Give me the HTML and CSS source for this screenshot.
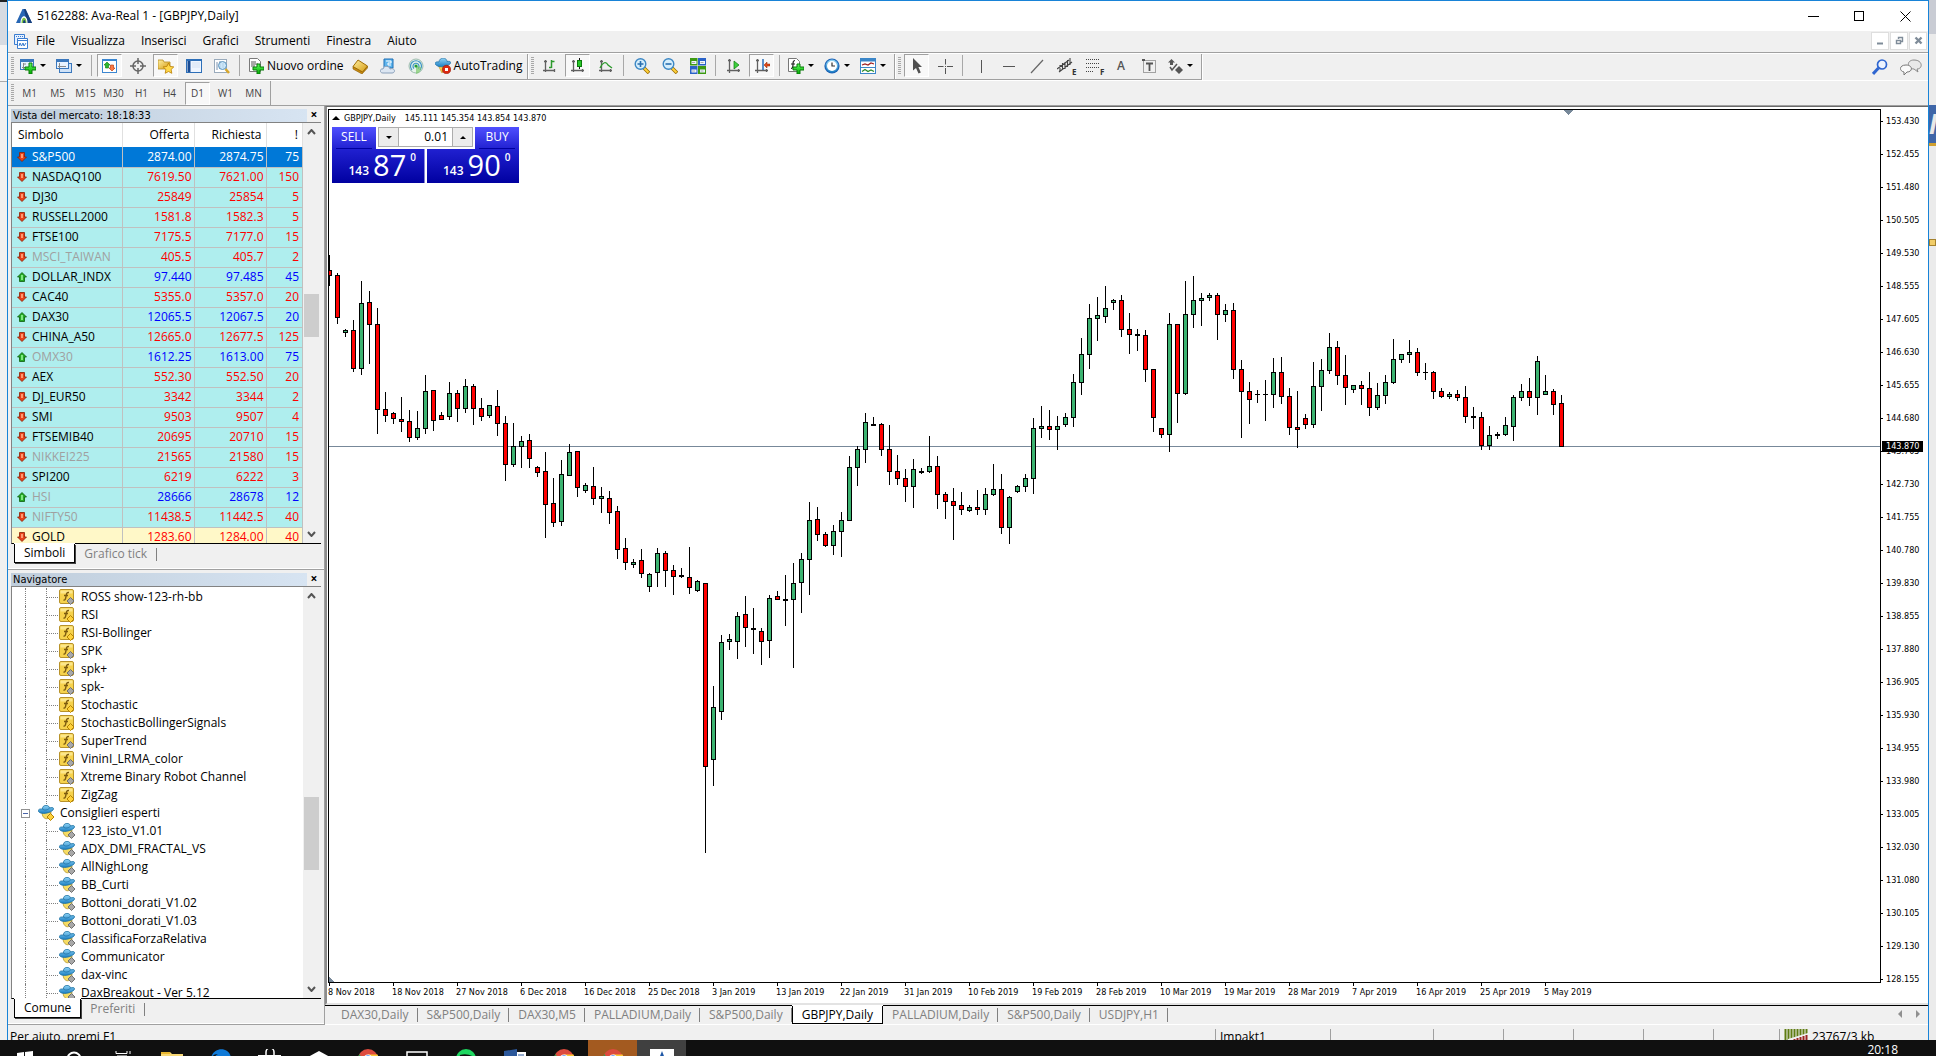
FILE: index.html
```html
<!DOCTYPE html>
<html lang="it">
<head>
  <meta charset="UTF-8">
  <title>5162288: Ava-Real 1 - [GBPJPY,Daily]</title>
  <link rel="stylesheet" href="styles.css">
</head>
<body>

<!-- Icon sprite -->
<svg class="sprite" aria-hidden="true">
  <defs>
    <linearGradient id="gBlue" x1="0" y1="0" x2="0" y2="1"><stop offset="0" stop-color="#8fd3f5"/><stop offset="1" stop-color="#1b7fc4"/></linearGradient>
    <linearGradient id="gGold" x1="0" y1="0" x2="1" y2="1"><stop offset="0" stop-color="#fff0a0"/><stop offset="1" stop-color="#d59a10"/></linearGradient>
    <linearGradient id="gGreen" x1="0" y1="0" x2="0" y2="1"><stop offset="0" stop-color="#5dff5d"/><stop offset="1" stop-color="#00a800"/></linearGradient>
  </defs>
  <symbol id="ava" viewBox="0 0 16 16"><path d="M6.500 1h3L16 15H0z" fill="#2766b4"/><path d="M8 1h1.500L16 15h-5z" fill="#173f7c"/><path d="M4.500 15c0-9 7-9 7 0z" fill="#fff"/><path d="M5.500 15c0-7 5-7 5 0z" fill="#7cc242"/><path d="M7 15c0-4 2.500-4 2.500 0z" fill="#173f7c"/></symbol>
  <symbol id="doc" viewBox="0 0 16 16"><path d="M2.500 1.500h10v10h-10z" fill="#e7f1ff" stroke="#3b7dd0"/><path d="M2 3.500h11" stroke="#3b7dd0" stroke-dasharray="1 1"/><path d="M5.500 5.500h10v10h-10z" fill="#fff" stroke="#3b7dd0"/><path d="M5.500 7.500h10" stroke="#3b7dd0"/><path d="M7 13l1-3 1.500 3 1.500-3 1 3 2-3" fill="none" stroke="#3b7dd0"/></symbol>
  <symbol id="newchart" viewBox="0 0 16 16"><rect x=".5" y="1.500" width="13" height="10" fill="#e8f3ff" stroke="#3b78bd"/><path d="M0 3h14" stroke="#3b78bd" stroke-width="2"/><path d="M3.500 5v6M2 9.500h8M3 6h3" stroke="#8a8a8a" fill="none"/><path d="M9 5h3v4h4v3h-4v4H9v-4H5V9h4z" fill="url(#gGreen)" stroke="#0a7a0a"/></symbol>
  <symbol id="profiles" viewBox="0 0 16 16"><rect x="3.500" y="5.500" width="12" height="9" fill="#cfe2f7" stroke="#3b78bd"/><rect x=".5" y="1.500" width="12" height="9" fill="#e8f3ff" stroke="#3b78bd"/><path d="M0 3h13" stroke="#3b78bd" stroke-width="2"/><path d="M3.500 5v5M2 8.500h8" stroke="#8a8a8a"/></symbol>
  <symbol id="market" viewBox="0 0 16 16"><rect x=".5" y="1.500" width="14" height="13" fill="#fff" stroke="#3b86d0"/><path d="M0 2h15" stroke="#3b86d0" stroke-width="2"/><path d="M5 4l3 3H6.500v3h-3V7H2z" fill="#2eb82e" stroke="#0a7a0a" stroke-width=".6"/><path d="M10 13l3-3h-1.500V7h-3v3H7z" fill="#ff7a45" stroke="#b03000" stroke-width=".6"/></symbol>
  <symbol id="data" viewBox="0 0 16 16"><circle cx="8" cy="8" r="5" fill="none" stroke="#666" stroke-width="1.500"/><path d="M8 0v6M8 10v6M0 8h6M10 8h6" stroke="#666" stroke-width="1.500"/></symbol>
  <symbol id="folder" viewBox="0 0 16 16"><path d="M0 2h5l1 2h6v7H0z" fill="url(#gGold)" stroke="#b58a1d" stroke-width=".8"/><path d="M10.500 5l1.600 3.400 3.700.5-2.700 2.600.7 3.800-3.300-1.800-3.300 1.800.7-3.800L5.200 8.900l3.700-.5z" fill="#ffd84a" stroke="#b97d00" stroke-width=".8"/></symbol>
  <symbol id="terminal" viewBox="0 0 16 16"><rect x=".5" y="1.500" width="15" height="13" fill="#eef5ff" stroke="#2d6fb8"/><path d="M1 2.500h14" stroke="#2d6fb8"/><path d="M3 3v11" stroke="#1a4c94" stroke-width="3"/><path d="M6 5h8M6 7h8M6 9h8" stroke="#c5d5ea" stroke-width=".6"/></symbol>
  <symbol id="tester" viewBox="0 0 16 16"><rect x=".5" y="1.500" width="12" height="13" fill="#fff" stroke="#9ab"/><path d="M3 4v8M6 3v8M9 5v5" stroke="#7d93b0"/><circle cx="8.500" cy="7.500" r="4" fill="#bfe1f8" fill-opacity=".8" stroke="#5b93bd"/><path d="M11.500 11l3.500 4" stroke="#d7a62b" stroke-width="2.500"/></symbol>
  <symbol id="order" viewBox="0 0 16 16"><path d="M1.500.5h8l3 3v10h-11z" fill="#fff" stroke="#7a7a7a"/><path d="M3 4h5M3 6h7M3 8h4" stroke="#555"/><path d="M9 6h3v3h4v3h-4v4H9v-4H5V9h4z" fill="url(#gGreen)" stroke="#0a7a0a"/></symbol>
  <symbol id="gold" viewBox="0 0 16 16"><path d="M1 8.500V11l9 5 5.500-6V8l-5 6z" fill="#c98a10" stroke="#8a5c00" stroke-width=".6"/><path d="M6 2l9.500 6-5 6L1 8.500z" fill="url(#gGold)" stroke="#a06d05"/></symbol>
  <symbol id="cloud" viewBox="0 0 16 16"><path d="M4 1h9v9H4z" fill="#5fb4ec" stroke="#1c6fb5"/><path d="M6 3h5v2H8v2h3" stroke="#fff" fill="none"/><path d="M3 15c-4 0-3-5 0-4 1-4 7-3 7 0 5-2 6 4 2 4z" fill="#dce6f2" stroke="#8aa0ba"/></symbol>
  <symbol id="signal" viewBox="0 0 16 16"><circle cx="8" cy="8" r="7" fill="#e6f2ea" stroke="#9dbcae"/><path d="M4 12a5.500 5.500 0 1 1 8 0M6 10.500a3 3 0 1 1 4 0" fill="none" stroke="#3d94c6" stroke-width="1.200"/><path d="M8 8v8c4-1 5-4 5-7" fill="#7cc96a" fill-opacity=".7"/><circle cx="8" cy="8" r="1.600" fill="#1f9a3a"/></symbol>
  <symbol id="auto" viewBox="0 0 16 16"><path d="M3 7l4 8 6-8z" fill="#ffd84a" stroke="#b58a1d" stroke-width=".6"/><path d="M4 4c0-5 8-5 8-.5 5-1 5 2.500-.5 4.500-4 1.500-9 1-11-1.500C-.5 4.500 1 3.500 4 4z" fill="url(#gBlue)" stroke="#1a6da3" stroke-width=".7"/><circle cx="11.500" cy="11.500" r="4.300" fill="#d92a12" stroke="#8e1200" stroke-width=".5"/><rect x="10" y="10" width="3" height="3" fill="#fff"/></symbol>
  <symbol id="bars" viewBox="0 0 16 16"><path d="M3.500 2v12M1 12.500h12M2 3.500h3M12.500 11v3" fill="none" stroke="#606060" stroke-width="1.300"/><path d="M9.500 2v8M9.500 3.500h3M7 9.500h2.500" fill="none" stroke="#2c9a2c" stroke-width="1.500"/></symbol>
  <symbol id="candle" viewBox="0 0 16 16"><path d="M3.500 2v12M1 12.500h13M2 3.500h3M12.500 11v3" fill="none" stroke="#606060" stroke-width="1.300"/><path d="M9.500 0v11" stroke="#111"/><rect x="7.500" y="2.500" width="4" height="6" fill="#28c828" stroke="#0a7a0a"/></symbol>
  <symbol id="line" viewBox="0 0 16 16"><path d="M3.500 2v12M1 12.500h13M2 3.500h3M12.500 11v3" fill="none" stroke="#606060" stroke-width="1.300"/><path d="M2 10c3-6 6-7 8-3l4 3" fill="none" stroke="#2c9a2c" stroke-width="1.300"/></symbol>
  <symbol id="zoomin" viewBox="0 0 16 16"><path d="M10 10l5 5" stroke="#9a6b00" stroke-width="3.500"/><path d="M10 10l4.500 4.500" stroke="#ffd23c" stroke-width="2"/><circle cx="6.500" cy="6" r="5.300" fill="#d5eefc" stroke="#3c87c4" stroke-width="1.400"/><path d="M3.500 6h6M6.500 3v6" stroke="#2a6faf" stroke-width="1.600"/></symbol>
  <symbol id="zoomout" viewBox="0 0 16 16"><path d="M10 10l5 5" stroke="#9a6b00" stroke-width="3.500"/><path d="M10 10l4.500 4.500" stroke="#ffd23c" stroke-width="2"/><circle cx="6.500" cy="6" r="5.300" fill="#d5eefc" stroke="#3c87c4" stroke-width="1.400"/><path d="M3.500 6h6" stroke="#2a6faf" stroke-width="1.600"/></symbol>
  <symbol id="tile" viewBox="0 0 16 16"><path d="M0 0h7.500v7.500H0zM8 8h8v8H8z" fill="#3d9a12"/><path d="M8 0h8v7.500H8zM0 8h7.500v8H0z" fill="#2a62c8"/><path d="M1.500 3h5v3h-5zM10 3h5v3h-5zM1.500 11.500h5v3h-5zM10 11.500h5v3h-5z" fill="#eef6ff"/><path d="M2 4.500h3M10.500 4.500h3M2 13h3M10.500 13h3" stroke="#999" stroke-width=".8"/></symbol>
  <symbol id="scroll" viewBox="0 0 16 16"><path d="M3.500 1v14M1 12.500h13M2 2.500h3M12.500 11v3" fill="none" stroke="#606060" stroke-width="1.300"/><path d="M8 3l5 4-5 4z" fill="#3ccf3c" stroke="#0a7a0a" stroke-width=".7"/></symbol>
  <symbol id="shift" viewBox="0 0 16 16"><path d="M3.500 1v14M1 12.500h13M2 2.500h3M12.500 11v3" fill="none" stroke="#606060" stroke-width="1.300"/><path d="M9 1v11" stroke="#1b66b8" stroke-width="1.400"/><path d="M10 7l3-3v2h3v2h-3v2z" fill="#e04a1a" stroke="#8e2500" stroke-width=".5"/></symbol>
  <symbol id="indic" viewBox="0 0 16 16"><path d="M.5.5h8l3 3v10H.500z" fill="#fff" stroke="#777"/><path d="M7 2.500c-2 0-2 2-2 4s0 4-2 4M3 6h4" fill="none" stroke="#222" stroke-width="1.200"/><path d="M9 6h3v3h4v3h-4v4H9v-4H5V9h4z" fill="url(#gGreen)" stroke="#0a7a0a"/></symbol>
  <symbol id="clock" viewBox="0 0 16 16"><circle cx="8" cy="8" r="7.600" fill="#1c63b6"/><circle cx="8" cy="8" r="6.400" fill="url(#gBlue)"/><circle cx="8" cy="8" r="5" fill="#fff"/><path d="M8 4.500V8h3" fill="none" stroke="#333" stroke-width="1.200"/></symbol>
  <symbol id="templ" viewBox="0 0 16 16"><rect x=".5" y=".5" width="15" height="15" fill="#fff" stroke="#3b86c8"/><path d="M1 2h14" stroke="#3b86c8" stroke-width="3"/><path d="M0 9.500h16" stroke="#3b86c8"/><path d="M2 7l3-1 3 1 3-2 3 1" fill="none" stroke="#a02020" stroke-width="1.300"/><path d="M2 13.500l3-2 3 2 3-1.500 3 1.500" fill="none" stroke="#2a8a2a" stroke-width="1.300"/></symbol>
  <symbol id="cursor" viewBox="0 0 16 16"><path d="M4 0v12.500l3-2.500 2.500 5.500 2.300-1L9.400 9H13z" fill="#505050"/></symbol>
  <symbol id="cross" viewBox="0 0 16 16"><path d="M8.500 1v5.500M8.500 10v6M1 8.500h5.500M10 8.500h6" stroke="#555"/><path d="M8 8h1v1H8z" fill="#555"/></symbol>
  <symbol id="vline" viewBox="0 0 16 16"><path d="M8.500 2v13" stroke="#555"/></symbol>
  <symbol id="hline" viewBox="0 0 16 16"><path d="M2 8.500h12" stroke="#555"/></symbol>
  <symbol id="trend" viewBox="0 0 16 16"><path d="M2 15L14 2" stroke="#666" stroke-width="1.200"/></symbol>
  <symbol id="channel" viewBox="0 0 16 16"><path d="M0 11l12-9M2 14L15 4M3 7v6M5.500 5v7M8 4v7M10.500 2v7M13 0v7" stroke="#444" stroke-width="1.100"/></symbol>
  <symbol id="fib" viewBox="0 0 16 16"><path d="M1 1.500h14M1 5.500h14M1 9.500h14M1 13.500h8" stroke="#444" stroke-dasharray="1 1"/></symbol>
  <symbol id="tbox" viewBox="0 0 16 16"><rect x="2.500" y="2.500" width="12" height="12" fill="none" stroke="#555" stroke-dasharray="1 1"/><path d="M5 5.500h7M8.500 5v8" stroke="#555" stroke-width="1.800"/><path d="M1 1h3v2H1z" fill="#555"/></symbol>
  <symbol id="shapes" viewBox="0 0 16 16"><path d="M4.500 1L8 4.500H6V7H3V4.500H1zM12 8l4 4-4 4-4-4z" fill="#555"/><path d="M3 9l2 3 5-6" fill="none" stroke="#555" stroke-width="1.500"/></symbol>
  <symbol id="search" viewBox="0 0 16 16"><circle cx="10" cy="5.500" r="4.500" fill="#eef4ff" stroke="#2f66d0" stroke-width="1.700"/><path d="M6.500 9L1 15" stroke="#2f66d0" stroke-width="3"/></symbol>
  <symbol id="chat" viewBox="0 0 22 16"><path d="M14 1c9 0 9 9 3 9l1 3-4-3C7 10 6 1 14 1z" fill="#e9e9e9" stroke="#8a8a8a"/><path d="M6 6c7 0 7 7 1 7l-3 3v-3C-1 12-1 6 6 6z" fill="#fafafa" stroke="#777"/></symbol>
  <symbol id="up" viewBox="0 0 10 10"><path d="M5 .5l4.500 4.500H7.500v4.500h-5V5H.5z" fill="#25a825" stroke="#0b5e0b" stroke-width=".8"/><path d="M4 3h2v5H4z" fill="#7ee87e"/></symbol>
  <symbol id="down" viewBox="0 0 10 10"><path d="M5 9.500L.5 5h2V.5h5V5h2z" fill="#e8421c" stroke="#8a1f00" stroke-width=".8"/><path d="M4 2h2v4H4z" fill="#ff9a70"/></symbol>
  <symbol id="fx" viewBox="0 0 16 16"><rect x=".5" y=".5" width="14" height="14" rx="1.500" fill="#f6d24c" stroke="#b8922a"/><path d="M1.500 1.500h12v3h-12z" fill="#fff0a8" stroke="none" opacity=".7"/><path d="M10 3.500c-2.500-.5-2.500 1.500-3 4s-.7 4-2.500 3.500M5 6.500h4" fill="none" stroke="#7d5c10" stroke-width="1.400"/><path d="M11.500 8.500l3.500 3.500-3.500 3.500L8 12z"/></symbol>
  <symbol id="hat" viewBox="0 0 16 16"><path d="M4 7c0 9 9 9 9 0z" fill="#f7dc62" stroke="#a88a22" stroke-width=".7"/><path d="M4.500 4C4-.5 11-.8 11.500 3c5-1.500 5.500 1.500 1 3.800C8 9 2 9 .5 6.500-.3 4.500 1.500 3.700 4.500 4z" fill="url(#gBlue)" stroke="#1b6f9f" stroke-width=".8"/><path d="M4.500 4.200c2 1.500 5 1 7-1" fill="none" stroke="#1b6f9f" stroke-width=".7"/><path d="M12.500 8.500L16 12l-3.500 3.500L9 12z"/></symbol>
  <symbol id="chrome" viewBox="0 0 22 22"><circle cx="11" cy="11" r="11" fill="#dd4b3e"/><path d="M11 6h10.500A11 11 0 0 1 11 22z" fill="#fdc734"/><path d="M1.500 5.500L7 14l4 8A11 11 0 0 1 1.500 5.500z" fill="#2ba24c"/><circle cx="11" cy="11" r="5" fill="#fff"/><circle cx="11" cy="11" r="4" fill="#4286f5"/></symbol>
</svg>

<div class="desktop">
  <div class="behind behind-left"></div>

  <main class="window">
    <!-- Title bar -->
    <header class="titlebar">
      <svg class="icon"><use href="#ava"/></svg>
      <h1>5162288: Ava-Real 1 - [GBPJPY,Daily]</h1>
      <div class="window-buttons">
        <button aria-label="Riduci"><svg width="11" height="11"><path d="M0 5.500h11" stroke="#000"/></svg></button>
        <button aria-label="Ingrandisci"><svg width="11" height="11"><rect x=".5" y=".5" width="9" height="9" fill="none" stroke="#000"/></svg></button>
        <button aria-label="Chiudi"><svg width="11" height="11"><path d="M.5.5l10 10M10.500.5l-10 10" stroke="#000"/></svg></button>
      </div>
    </header>

    <!-- Menu bar -->
    <nav class="menubar">
      <svg class="icon"><use href="#doc"/></svg>
      <button>File</button>
      <button>Visualizza</button>
      <button>Inserisci</button>
      <button>Grafici</button>
      <button>Strumenti</button>
      <button>Finestra</button>
      <button>Aiuto</button>
      <div class="mdi-buttons">
        <button aria-label="Riduci grafico"><svg width="9" height="9"><path d="M1 7.500h6" stroke="#7f8c99" stroke-width="2"/></svg></button>
        <button aria-label="Ripristina grafico"><svg width="9" height="9"><path d="M3.500 3V1.500h4v4H6M3 1.500h5M1.500 4.500h4v3h-4z" fill="none" stroke="#7f8c99" stroke-width="1.400"/></svg></button>
        <button aria-label="Chiudi grafico"><svg width="9" height="9"><path d="M1.500 1.500l6 6M7.500 1.500l-6 6" stroke="#7f8c99" stroke-width="2.400"/></svg></button>
      </div>
    </nav>

    <!-- Main toolbar -->
    <div class="toolbar">
      <div class="group">
        <i class="grip"></i>
        <button class="drop" aria-label="Nuovo grafico"><svg class="icon"><use href="#newchart"/></svg></button>
        <button class="drop" aria-label="Profili"><svg class="icon"><use href="#profiles"/></svg></button>
        <i class="sep"></i>
        <button class="tool pressed" aria-label="Vista del mercato"><svg class="icon"><use href="#market"/></svg></button>
        <button class="tool" aria-label="Finestra dati"><svg class="icon"><use href="#data"/></svg></button>
        <button class="tool pressed" aria-label="Navigatore"><svg class="icon"><use href="#folder"/></svg></button>
        <button class="tool" aria-label="Terminale"><svg class="icon"><use href="#terminal"/></svg></button>
        <button class="tool" aria-label="Strategy Tester"><svg class="icon"><use href="#tester"/></svg></button>
        <i class="sep"></i>
        <button class="wide"><svg class="icon"><use href="#order"/></svg>Nuovo ordine</button>
        <button class="tool" aria-label="MetaEditor"><svg class="icon"><use href="#gold"/></svg></button>
        <button class="tool" aria-label="Cloud"><svg class="icon"><use href="#cloud"/></svg></button>
        <button class="tool" aria-label="Segnali"><svg class="icon"><use href="#signal"/></svg></button>
        <button class="wide"><svg class="icon"><use href="#auto"/></svg>AutoTrading</button>
      </div>
      <div class="group">
        <i class="grip"></i>
        <button class="tool" aria-label="Barre"><svg class="icon"><use href="#bars"/></svg></button>
        <button class="tool pressed" aria-label="Candele"><svg class="icon"><use href="#candle"/></svg></button>
        <button class="tool" aria-label="Linea"><svg class="icon"><use href="#line"/></svg></button>
        <i class="sep"></i>
        <button class="tool" aria-label="Zoom avanti"><svg class="icon"><use href="#zoomin"/></svg></button>
        <button class="tool" aria-label="Zoom indietro"><svg class="icon"><use href="#zoomout"/></svg></button>
        <button class="tool" aria-label="Affianca"><svg class="icon"><use href="#tile"/></svg></button>
        <i class="sep"></i>
        <button class="tool" aria-label="Scorrimento automatico"><svg class="icon"><use href="#scroll"/></svg></button>
        <button class="tool pressed" aria-label="Sposta grafico"><svg class="icon"><use href="#shift"/></svg></button>
        <i class="sep"></i>
        <button class="drop" aria-label="Indicatori"><svg class="icon"><use href="#indic"/></svg></button>
        <button class="drop" aria-label="Periodi"><svg class="icon"><use href="#clock"/></svg></button>
        <button class="drop" aria-label="Modelli"><svg class="icon"><use href="#templ"/></svg></button>
      </div>
      <div class="group">
        <i class="grip"></i>
        <button class="tool pressed" aria-label="Cursore"><svg class="icon"><use href="#cursor"/></svg></button>
        <button class="tool" aria-label="Mirino"><svg class="icon"><use href="#cross"/></svg></button>
        <i class="sep"></i>
        <button class="tool" aria-label="Linea verticale"><svg class="icon"><use href="#vline"/></svg></button>
        <button class="tool" aria-label="Linea orizzontale"><svg class="icon"><use href="#hline"/></svg></button>
        <button class="tool" aria-label="Trendline"><svg class="icon"><use href="#trend"/></svg></button>
        <button class="tool marked"><svg class="icon"><use href="#channel"/></svg><b>E</b></button>
        <button class="tool marked"><svg class="icon"><use href="#fib"/></svg><b>F</b></button>
        <button class="tool letter">A</button>
        <button class="tool" aria-label="Etichetta"><svg class="icon"><use href="#tbox"/></svg></button>
        <button class="drop" aria-label="Frecce"><svg class="icon"><use href="#shapes"/></svg></button>
      </div>
      <div class="toolbar-right">
        <button aria-label="Cerca"><svg class="icon"><use href="#search"/></svg></button>
        <button aria-label="Chat"><svg class="chat"><use href="#chat"/></svg></button>
      </div>
    </div>

    <!-- Timeframes -->
    <div class="toolbar periods">
      <div class="group">
        <i class="grip"></i>
        <button class="tool">M1</button>
        <button class="tool">M5</button>
        <button class="tool">M15</button>
        <button class="tool">M30</button>
        <button class="tool">H1</button>
        <button class="tool">H4</button>
        <button class="tool pressed">D1</button>
        <button class="tool">W1</button>
        <button class="tool">MN</button>
      </div>
    </div>

    <div class="workspace">
      <aside class="side">
        <!-- Market watch -->
        <section class="panel market">
          <div class="panel-title"><h2>Vista del mercato: 18:18:33</h2><button aria-label="Chiudi">×</button></div>
          <div class="box">
            <table class="quotes">
              <thead>
                <tr><th>Simbolo</th><th>Offerta</th><th>Richiesta</th><th>!</th></tr>
              </thead>
              <tbody id="quotes"></tbody>
            </table>
            <div class="scrollbar">
              <svg width="9" height="6"><path d="M1 5l3.500-4L8 5" fill="none" stroke="#555" stroke-width="2"/></svg>
              <i class="thumb"></i>
              <svg width="9" height="6"><path d="M1 1l3.500 4L8 1" fill="none" stroke="#555" stroke-width="2"/></svg>
            </div>
          </div>
          <div class="panel-tabs"><button class="active">Simboli</button><button>Grafico tick</button></div>
        </section>

        <!-- Navigator -->
        <section class="panel navigator">
          <div class="panel-title"><h2>Navigatore</h2><button aria-label="Chiudi">×</button></div>
          <div class="box">
            <ul class="tree" id="tree"></ul>
            <div class="scrollbar">
              <svg width="9" height="6"><path d="M1 5l3.500-4L8 5" fill="none" stroke="#555" stroke-width="2"/></svg>
              <i class="thumb"></i>
              <svg width="9" height="6"><path d="M1 1l3.500 4L8 1" fill="none" stroke="#555" stroke-width="2"/></svg>
            </div>
          </div>
          <div class="panel-tabs"><button class="active">Comune</button><button>Preferiti</button></div>
        </section>
      </aside>

      <!-- Chart -->
      <section class="chart-area">
        <div class="chart">
          <div class="plot">
            <svg class="candles" id="candles"></svg>
            <div class="chart-head"><i></i><span>GBPJPY,Daily</span><span class="ohlc">145.111 145.354 143.854 143.870</span></div>
            <div class="trade">
              <button class="deal sell"><span class="side-name">SELL</span><span class="price"><b>143</b><big>87</big><sup>0</sup></span></button>
              <button class="deal buy"><span class="side-name">BUY</span><span class="price"><b>143</b><big>90</big><sup>0</sup></span></button>
              <div class="volume">
                <button aria-label="Diminuisci" class="less"></button>
                <input type="text" value="0.01" aria-label="Volume">
                <button aria-label="Aumenta" class="more"></button>
              </div>
            </div>
          </div>
          <div class="price-axis"><ol id="prices"></ol><span class="current">143.870</span></div>
          <ol class="time-axis" id="dates"></ol>
        </div>
        <div class="chart-tabs">
          <button>DAX30,Daily</button>
          <button>S&amp;P500,Daily</button>
          <button>DAX30,M5</button>
          <button>PALLADIUM,Daily</button>
          <button>S&amp;P500,Daily</button>
          <button class="active">GBPJPY,Daily</button>
          <button>PALLADIUM,Daily</button>
          <button>S&amp;P500,Daily</button>
          <button>USDJPY,H1</button>
          <span class="tab-scroll"><i class="left"></i><i class="right"></i></span>
        </div>
      </section>
    </div>

    <!-- Status bar -->
    <footer class="status">
      <span class="help">Per aiuto, premi F1</span>
      <span class="cell profile">Impakt1</span>
      <span class="cell date"></span>
      <span class="cell value"></span>
      <span class="cell value"></span>
      <span class="cell value"></span>
      <span class="cell value"></span>
      <span class="cell volume-cell"></span>
      <span class="cell traffic">
        <svg width="24" height="16"><path d="M1.500 0v16M4.500 0v16M7.500 0v16M10.500 0v16M13.500 0v16M16.500 0v16M19.500 0v16M22.500 0v16" stroke="#5f7d12" stroke-width="2"/><path d="M4 16V10L24 4v12z" fill="#f0f0f0"/><path d="M4.500 12v4M7.500 11v5M10.500 10v6M13.500 9v7M16.500 8v8M19.500 7v9M22.500 6v10" stroke="#9c2222" stroke-width="2"/></svg>
        23767/3 kb
      </span>
    </footer>
  </main>

  <div class="behind behind-right"><i class="tab"></i><i class="tile">M</i><i class="note"></i></div>
</div>

<!-- Windows taskbar -->
<div class="taskbar">
  <button aria-label="Start"><svg width="16" height="16"><path d="M0 2l7-1v6H0zM8 1l8-1v7H8zM0 8h7v6l-7-1zM8 8h8v8l-8-1z" fill="#fff"/></svg></button>
  <button aria-label="Cortana"><svg width="16" height="16"><circle cx="8" cy="8" r="6.500" fill="none" stroke="#fff" stroke-width="2"/></svg></button>
  <button aria-label="Attività"><svg width="16" height="16"><path d="M1 0v2.500h11V0M15 0v3M15 5v8M2 5h10v8H2z" fill="none" stroke="#fff"/></svg></button>
  <button aria-label="Esplora file"><svg width="22" height="18"><path d="M0 1h9l2 2h11v15H0z" fill="#f7d774"/><path d="M0 1h9v2H0z" fill="#e8b630"/></svg></button>
  <button aria-label="Edge" class="tall"><svg width="20" height="20"><path d="M0 10C1-3 20-3 20 10v2H6c1 5 8 5 12 3v4C8 23 0 18 2 11c1-3 3-5 5-6-5 0-6 3-7 5z" fill="#0f7ad8"/></svg></button>
  <button aria-label="Store" class="tall"><svg width="24" height="20"><path d="M8 6V3a3.500 3.500 0 0 1 8 0v3" fill="none" stroke="#fff" stroke-width="1.500"/><path d="M0 6h23v14H0z" fill="#fff"/></svg></button>
  <button aria-label="App"><svg width="22" height="20"><path d="M11 0l11 6v14H0V6z" fill="#fff"/></svg></button>
  <button aria-label="Chrome" class="tall"><svg width="20" height="20"><use href="#chrome"/></svg></button>
  <button aria-label="Console"><svg width="22" height="18"><rect x="1" y="1" width="20" height="16" fill="#111" stroke="#fff" stroke-width="1.500"/></svg></button>
  <button aria-label="Spotify" class="tall"><svg width="20" height="20"><circle cx="10" cy="10" r="10" fill="#1ed760"/><path d="M4 7c4-1 8-1 12 1" fill="none" stroke="#111" stroke-width="2"/></svg></button>
  <button aria-label="Word" class="tall"><svg width="22" height="20"><path d="M11 3h11v17H11z" fill="#fff"/><path d="M0 2l13-2v20H0z" fill="#2b579a"/><path d="M14 6h6M14 9h6" stroke="#2b579a"/></svg></button>
  <button aria-label="Chrome" class="tall"><svg width="20" height="20"><use href="#chrome"/></svg></button>
  <button aria-label="Chrome" class="tall alert"><svg width="20" height="20"><use href="#chrome"/></svg></button>
  <button aria-label="Ava" class="tall on"><svg width="24" height="20"><path d="M0 0h24v20H0z" fill="#fff"/><path d="M12 2l7 18H5z" fill="#1d56a5"/></svg></button>
  <time>20:18</time>
</div>

<script src="script.js"></script>
</body>
</html>
```

FILE: styles.css
```css
/* Base */
* {
  box-sizing: border-box;
}

body {
  margin: 0;
  height: 100vh;
  display: flex;
  flex-direction: column;
  overflow: hidden;
  background: #f0f0f0;
  color: #000;
  font: 12px/16px "Open Sans", "Noto Sans", sans-serif;
}

h1, h2 {
  margin: 0;
  font-size: 12px;
  font-weight: normal;
}

button {
  margin: 0;
  padding: 0;
  border: 0;
  background: none;
  color: inherit;
  font: inherit;
  white-space: nowrap;
}

ul, ol {
  margin: 0;
  padding: 0;
  list-style: none;
}

.sprite {
  position: absolute;
  width: 0;
  height: 0;
}

.icon {
  width: 16px;
  height: 16px;
  flex: none;
}

/* Desktop and the windows that show at both sides */
.desktop {
  flex: 1;
  min-height: 0;
  display: flex;
  overflow: hidden;
}

.behind {
  width: 7px;
  flex: none;
  overflow: hidden;
}

.behind-left {
  background: linear-gradient(#222 2px, #d6dbe2 2px, #d6dbe2 45px, #f4f4f4 45px, #f4f4f4 81px, #aaa 81px, #aaa 82px, #f0f0f0 82px);
}

.behind-right {
  display: flex;
  flex-direction: column;
  background: #ebebeb;
}

.behind-right .tab {
  height: 34px;
  background: #c9ccd4;
  margin-bottom: 71px;
}

.behind-right .tile {
  height: 41px;
  background: #3f66a8;
  border-bottom: 3px solid #d0a030;
  color: #e8e8e8;
  font: italic bold 30px/38px "Liberation Sans", sans-serif;
  margin-bottom: 93px;
}

.behind-right .note {
  height: 7px;
  background: #f1cd69;
  border: 1px solid #a5822e;
}

/* The window runs on below the taskbar */
.window {
  flex: 1;
  min-width: 0;
  height: calc(100% + 8px);
  display: flex;
  flex-direction: column;
  border: 1px solid #1883d7;
  border-bottom: 0;
  background: #f0f0f0;
}

.titlebar {
  height: 30px;
  flex: none;
  display: flex;
  align-items: center;
  gap: 5px;
  padding-left: 8px;
  background: #fff;
}

.window-buttons {
  margin-left: auto;
  display: flex;
}

.window-buttons button {
  width: 46px;
  height: 29px;
  display: grid;
  place-items: center;
}

.menubar {
  height: 22px;
  flex: none;
  display: flex;
  align-items: center;
  gap: 16px;
  padding: 0 0 2px 4px;
  border-bottom: 1px solid #a0a0a0;
}

.menubar .icon {
  margin-right: -8px;
}

.mdi-buttons {
  margin-left: auto;
  display: flex;
  gap: 1px;
  padding-right: 1px;
}

.mdi-buttons button {
  width: 18px;
  height: 18px;
  display: grid;
  place-items: center;
  background: #fff;
  border: 1px solid #dedede;
}

/* Toolbars */
.toolbar {
  height: 27px;
  flex: none;
  display: flex;
  border-top: 1px solid #fff;
}

.group {
  display: flex;
  align-items: center;
  gap: 3px;
  padding: 0 4px 2px 3px;
  border-right: 1px solid #a0a0a0;
  border-bottom: 1px solid #a0a0a0;
  box-shadow: 1px 1px #fff;
}

.grip {
  width: 3px;
  height: 18px;
  background: repeating-linear-gradient(#a8a8a8 0 1px, #f0f0f0 1px 2px);
}

.sep {
  width: 1px;
  height: 21px;
  margin: 0 2px;
  background: #a8a8a8;
}

.tool {
  width: 25px;
  height: 23px;
  display: flex;
  align-items: center;
  justify-content: center;
}

.pressed {
  border: 1px solid #fff;
  border-top-color: #a0a0a0;
  border-left-color: #a0a0a0;
  background: #f8f8f8;
}

.drop {
  width: 33px;
  padding-left: 3px;
  display: flex;
  align-items: center;
  gap: 4px;
}

.drop::after {
  content: "";
  border: 3px solid transparent;
  border-top-color: #000;
  border-bottom: 0;
}

.wide {
  display: flex;
  align-items: center;
  gap: 3px;
  padding: 0 1px 0 3px;
}

.marked {
  position: relative;
}

.marked b {
  position: absolute;
  right: 1px;
  bottom: 1px;
  font-size: 8px;
  line-height: 8px;
  color: #333;
}

.letter {
  font-weight: 600;
  color: #555;
}

.toolbar-right {
  margin-left: auto;
  display: flex;
  align-items: center;
  gap: 12px;
  padding-right: 6px;
}

.toolbar-right button {
  display: flex;
}

.chat {
  width: 22px;
  height: 16px;
}

.periods {
  height: 26px;
  border-bottom: 1px solid #a0a0a0;
  color: #444;
  font-size: 10px;
}

.periods .group {
  padding-bottom: 0;
  border-bottom: 0;
  box-shadow: none;
}

/* Panels at the left */
.workspace {
  flex: 1;
  min-height: 0;
  display: flex;
}

.side {
  width: 317px;
  flex: none;
  display: flex;
  flex-direction: column;
  border-right: 1px solid #a0a0a0;
}

.panel {
  display: flex;
  flex-direction: column;
  min-height: 0;
  padding: 2px 3px 5px 3px;
  border-bottom: 1px solid #a0a0a0;
  box-shadow: inset 0 -1px #fff;
}

.market {
  flex: 0 0 464px;
}

.navigator {
  flex: 1;
}

.panel-title {
  height: 14px;
  flex: none;
  display: flex;
  align-items: center;
}

.panel-title h2 {
  flex: 1;
  padding-left: 2px;
  height: 13px;
  font: 11px/13px "DejaVu Sans Condensed", "DejaVu Sans", sans-serif;
  background: linear-gradient(90deg, #bfcddb, #d7e4f2);
}

.panel-title button {
  width: 14px;
  font-weight: bold;
  line-height: 12px;
}

.box {
  flex: 1;
  min-height: 0;
  display: flex;
  overflow: hidden;
  background: #fff;
  border-top: 1px solid #828282;
  border-left: 1px solid #828282;
  border-bottom: 1px solid #000;
}

.scrollbar {
  width: 18px;
  flex: none;
  display: flex;
  flex-direction: column;
  align-items: center;
  padding: 6px 2px 6px 0;
  background: #f0f0f0;
}

.thumb {
  width: 15px;
  height: 43px;
  margin: 159px 0 auto;
  background: #cdcdcd;
}

.navigator .thumb {
  height: 73px;
  margin-top: 198px;
}

.quotes {
  flex: 1;
  align-self: flex-start;
  table-layout: fixed;
  border-collapse: collapse;
}

.quotes th {
  height: 24px;
  padding: 0 4px 0 0;
  font-weight: normal;
  text-align: right;
  border-right: 1px solid #e0e0e0;
}

.quotes th:first-child {
  width: 110px;
  padding-left: 6px;
  text-align: left;
}

.quotes th:nth-child(2), .quotes th:nth-child(3) {
  width: 72px;
}

.quotes td {
  height: 20px;
  padding: 0 2px 0 0;
  text-align: right;
  background: #afeeee;
  color: #f00;
  border-right: 1px solid #c0c0c0;
  border-bottom: 1px solid #c0c0c0;
}

.quotes td:first-child {
  padding-left: 5px;
  text-align: left;
  color: #000;
}

.quotes td:last-child {
  padding-right: 3px;
}

.quotes td svg {
  width: 10px;
  height: 10px;
  margin-right: 5px;
  vertical-align: -1px;
}

.quotes .rise td {
  color: #00f;
}

.quotes .rise td:first-child {
  color: #000;
}

.quotes .closed td:first-child {
  color: #a0a0a0;
}

.quotes .selected td, .quotes .selected td:first-child {
  background: #0078d7;
  color: #fff;
}

.quotes .metal td {
  background: #fff8c8;
}

.panel-tabs {
  height: 20px;
  flex: none;
  display: flex;
  align-items: flex-start;
  padding-left: 3px;
  color: #808080;
}

.panel-tabs button {
  height: 19px;
  padding: 0 9px;
}

.panel-tabs button:not(.active)::after {
  content: "";
  display: inline-block;
  height: 13px;
  margin-left: 9px;
  border-left: 1px solid #808080;
  vertical-align: -3px;
}

.panel-tabs .active {
  background: #fff;
  color: #000;
  border: 1px solid #000;
  border-top: 0;
  box-shadow: 0 -1px #fff, 1px 1px #444;
}

/* Navigator tree */
.tree {
  flex: 1;
  min-width: 0;
  padding-top: 1px;
}

.tree li {
  height: 18px;
  display: flex;
  align-items: center;
  white-space: nowrap;
}

.tree .trunk {
  width: 21px;
  height: 18px;
  margin-left: 13px;
  border-left: 1px dotted #808080;
}

.tree .branch {
  width: 13px;
  height: 18px;
  background: linear-gradient(90deg, #808080 50%, transparent 50%) 0 9px / 2px 1px repeat-x;
  border-left: 1px dotted #808080;
}

.tree .icon {
  margin-right: 6px;
}

.tree .node {
  width: 9px;
  height: 9px;
  margin: 0 8px 0 9px;
  border: 1px solid #919191;
  background: linear-gradient(#4a64a8, #4a64a8) center / 5px 1px no-repeat, #fff;
}

.grey-badge {
  fill: #a8a8a8;
  stroke: #707070;
}

.gold-badge {
  fill: #ffd23c;
  stroke: #b58200;
}

/* Chart */
.chart-area {
  flex: 1;
  min-width: 0;
  display: flex;
  flex-direction: column;
}

.chart {
  flex: 1;
  min-height: 0;
  display: grid;
  grid-template-columns: minmax(0, 1fr) 47px;
  grid-template-rows: minmax(0, 1fr) 20px;
  padding: 2px 0 0 1px;
  background: #fff;
  border-top: 1px solid #696969;
  border-left: 2px solid #8c8c8c;
  border-bottom: 2px solid #e3e3e3;
  font: 9px/12px "DejaVu Sans Condensed", "DejaVu Sans", sans-serif;
}

.plot {
  position: relative;
  border: 1px solid #000;
}

.candles {
  display: block;
  width: 100%;
  height: 100%;
  shape-rendering: crispEdges;
}

.chart-head {
  position: absolute;
  top: 2px;
  left: 3px;
  display: flex;
  align-items: center;
  gap: 4px;
}

.chart-head i {
  border: 4px solid transparent;
  border-bottom-color: #000;
  border-top: 0;
}

.ohlc {
  margin-left: 5px;
}

/* One-click trading */
.trade {
  position: absolute;
  top: 17px;
  left: 3px;
  width: 187px;
  height: 56px;
  display: grid;
  grid-template-columns: 1fr 1fr;
  gap: 2px;
  font: 12px/16px "Open Sans", "Noto Sans", sans-serif;
  color: #fff;
}

.deal {
  display: flex;
  flex-direction: column;
  background: linear-gradient(#5050ff, #2020d0 40%, #0000a0);
}

.sell {
  clip-path: polygon(0 0, 44px 0, 44px 22px, 100% 22px, 100% 100%, 0 100%);
}

.buy {
  align-items: flex-end;
  clip-path: polygon(100% 0, calc(100% - 44px) 0, calc(100% - 44px) 22px, 0 22px, 0 100%, 100% 100%);
}

.side-name {
  width: 36px;
  height: 22px;
  margin: 0 4px;
  line-height: 20px;
  border-bottom: 1px solid #0000a0;
  text-align: center;
}

.price {
  width: 100%;
  height: 32px;
  padding-left: 8px;
  display: flex;
  justify-content: center;
  align-items: flex-end;
  gap: 4px;
}

.price b {
  font-weight: 600;
  line-height: 20px;
}

.price big {
  font-size: 29px;
  line-height: 32px;
}

.price sup {
  align-self: flex-start;
  font-weight: 600;
  line-height: 16px;
}

.volume {
  position: absolute;
  top: 0;
  left: 46px;
  width: 95px;
  height: 20px;
  display: flex;
  border: 1px solid #adadad;
}

.volume button {
  width: 19px;
  display: grid;
  place-items: center;
  background: #ececec;
}

.volume button::before {
  content: "";
  border: 3px solid transparent;
}

.volume .less::before {
  border-top-color: #000;
  border-bottom: 0;
}

.volume .more::before {
  border-bottom-color: #000;
  border-top: 0;
}

.volume input {
  flex: 1;
  min-width: 0;
  padding: 0 4px;
  border: solid #adadad;
  border-width: 0 1px;
  font: inherit;
  text-align: right;
}

/* Axes */
.price-axis {
  position: relative;
  padding-top: 6px;
}

.price-axis li {
  height: 33px;
  display: flex;
  align-items: flex-start;
  gap: 3px;
}

.price-axis li::before {
  content: "";
  width: 2px;
  height: 1px;
  margin-top: 6px;
  background: #000;
}

.current {
  position: absolute;
  top: 332px;
  left: 1px;
  width: 41px;
  padding-left: 4px;
  line-height: 11px;
  background: #000;
  color: #fff;
}

.time-axis {
  grid-column: 1 / 3;
  display: flex;
}

.time-axis li {
  width: 64px;
  flex: none;
  white-space: nowrap;
}

.time-axis li::before {
  content: "";
  display: block;
  width: 1px;
  height: 3px;
  margin-left: 1px;
  background: #000;
}

.chart-tabs {
  height: 20px;
  flex: none;
  display: flex;
  align-items: flex-start;
  padding-left: 7px;
  border-top: 1px solid #000;
  border-bottom: 1px solid #fff;
  color: #808080;
}

.chart-tabs button {
  height: 18px;
  padding: 0 9px;
  background: linear-gradient(#808080, #808080) right 2px / 1px 14px no-repeat;
}

.chart-tabs .active {
  background: #fff;
  color: #000;
  border: 1px solid #000;
  border-top: 0;
  box-shadow: 0 -1px #fff;
}

.tab-scroll {
  margin: 4px 8px 0 auto;
  display: flex;
  gap: 14px;
}

.tab-scroll i {
  border: 4px solid transparent;
}

.tab-scroll .left {
  border-right-color: #909090;
  border-left: 0;
}

.tab-scroll .right {
  border-left-color: #909090;
  border-right: 0;
}

/* Status bar */
.status {
  height: 23px;
  flex: none;
  display: flex;
  align-items: flex-start;
  padding: 4px 0 0 2px;
}

.help {
  flex: 1;
}

.cell {
  height: 19px;
  display: flex;
  gap: 4px;
  padding-left: 4px;
  border-left: 1px solid #a0a0a0;
}

.profile {
  width: 115px;
}

.date {
  width: 103px;
}

.value {
  width: 70px;
}

.volume-cell {
  width: 66px;
}

.traffic {
  width: 149px;
}

/* Taskbar, cut off by the screen edge */
.taskbar {
  height: 16px;
  flex: none;
  display: flex;
  align-items: flex-start;
  overflow: hidden;
  background: #101010;
  color: #fff;
}

.taskbar button {
  width: 49px;
  height: 40px;
  flex: none;
  padding-top: 11px;
  display: flex;
  justify-content: center;
  align-items: flex-start;
}

.taskbar .tall {
  padding-top: 9px;
}

.taskbar .alert {
  background: #a35a20;
}

.taskbar .on {
  background: #404040;
}

.taskbar time {
  margin: 2px 38px 0 auto;
}
```

FILE: script.js
```js
// Quotes: direction, symbol, bid, ask, spread, row class
const quotes = [
  ['down', 'S&P500', '2874.00', '2874.75', 75, 'selected'],
  ['down', 'NASDAQ100', '7619.50', '7621.00', 150],
  ['down', 'DJ30', '25849', '25854', 5],
  ['down', 'RUSSELL2000', '1581.8', '1582.3', 5],
  ['down', 'FTSE100', '7175.5', '7177.0', 15],
  ['down', 'MSCI_TAIWAN', '405.5', '405.7', 2, 'closed'],
  ['up', 'DOLLAR_INDX', '97.440', '97.485', 45],
  ['down', 'CAC40', '5355.0', '5357.0', 20],
  ['up', 'DAX30', '12065.5', '12067.5', 20],
  ['down', 'CHINA_A50', '12665.0', '12677.5', 125],
  ['up', 'OMX30', '1612.25', '1613.00', 75, 'closed'],
  ['down', 'AEX', '552.30', '552.50', 20],
  ['down', 'DJ_EUR50', '3342', '3344', 2],
  ['down', 'SMI', '9503', '9507', 4],
  ['down', 'FTSEMIB40', '20695', '20710', 15],
  ['down', 'NIKKEI225', '21565', '21580', 15, 'closed'],
  ['down', 'SPI200', '6219', '6222', 3],
  ['up', 'HSI', '28666', '28678', 12, 'closed'],
  ['down', 'NIFTY50', '11438.5', '11442.5', 40, 'closed'],
  ['down', 'GOLD', '1283.60', '1284.00', 40, 'metal']
];

document.getElementById('quotes').innerHTML = quotes.map(q =>
  `<tr class="${q[0] === 'up' ? 'rise' : ''} ${q[5] || ''}"><td><svg><use href="#${q[0]}"/></svg>${q[1].replace('&', '&amp;')}</td><td>${q[2]}</td><td>${q[3]}</td><td>${q[4]}</td></tr>`
).join('');

// Navigator: icon, badge colour, name
const tree = [
  ['fx', 'grey', 'ROSS show-123-rh-bb'],
  ['fx', 'gold', 'RSI'],
  ['fx', 'gold', 'RSI-Bollinger'],
  ['fx', 'grey', 'SPK'],
  ['fx', 'grey', 'spk+'],
  ['fx', 'grey', 'spk-'],
  ['fx', 'gold', 'Stochastic'],
  ['fx', 'gold', 'StochasticBollingerSignals'],
  ['fx', 'grey', 'SuperTrend'],
  ['fx', 'grey', 'VininI_LRMA_color'],
  ['fx', 'grey', 'Xtreme Binary Robot Channel'],
  ['fx', 'gold', 'ZigZag'],
  ['group', 'gold', 'Consiglieri esperti'],
  ['hat', 'grey', '123_isto_V1.01'],
  ['hat', 'grey', 'ADX_DMI_FRACTAL_VS'],
  ['hat', 'grey', 'AllNighLong'],
  ['hat', 'grey', 'BB_Curti'],
  ['hat', 'grey', 'Bottoni_dorati_V1.02'],
  ['hat', 'grey', 'Bottoni_dorati_V1.03'],
  ['hat', 'grey', 'ClassificaForzaRelativa'],
  ['hat', 'grey', 'Communicator'],
  ['hat', 'grey', 'dax-vinc'],
  ['hat', 'grey', 'DaxBreakout - Ver 5.12']
];

document.getElementById('tree').innerHTML = tree.map(([icon, badge, name]) => {
  const group = icon === 'group';
  const lines = group ? '<i class="node"></i>' : '<i class="trunk"></i><i class="branch"></i>';
  return `<li>${lines}<svg class="icon ${badge}-badge"><use href="#${group ? 'hat' : icon}"/></svg>${name}</li>`;
}).join('');

// Candles, 8px apart: high, body top, body bottom, low (pixels), r = bear, g = bull, k = doji
const candles = `
255 270 276 286 r|273 275 318 324 r|329 330 333 337 g|320 330 369 372 r|281 303 369 375 g
291 302 325 364 r|308 324 410 434 r|392 409 416 422 r|412 413 419 424 r|397 419 422 432 r
410 421 438 442 r|411 428 438 440 g|375 391 429 434 g|390 390 421 431 r|412 415 420 420 r
382 393 417 420 g|390 393 409 422 r|379 386 409 413 g|384 386 409 425 r|398 408 417 421 r
405 405 416 418 g|390 406 424 436 r|416 423 465 481 r|423 446 465 467 g|436 441 447 468 g
434 440 459 468 r|466 467 473 477 r|452 471 505 538 r|478 503 523 527 r|460 474 522 526 g
444 452 476 476 g|451 451 488 497 r|483 485 491 493 g|467 486 499 505 r|487 496 499 513 g
491 498 513 524 r|506 511 550 559 r|538 548 563 570 r|559 562 565 568 g|549 560 574 578 r
573 574 587 592 g|548 553 573 587 g|551 553 571 587 r|565 570 577 595 r|568 575 577 578 k
547 577 588 594 r|580 581 591 592 g|583 583 767 853 r|686 707 760 786 g|635 642 712 720 g
634 639 642 650 g|612 616 642 659 g|596 614 628 647 r|608 628 630 654 k|628 631 642 665 r
595 598 641 658 g|591 596 600 600 r|575 599 601 626 k|563 583 600 668 g|553 559 583 613 g
502 520 560 595 g|507 519 535 541 r|532 534 546 547 r|525 531 546 555 g|512 520 532 557 g
456 467 521 521 g|446 449 468 486 g|413 422 450 463 g|417 424 426 426 k|423 424 450 456 r
425 449 472 485 r|455 471 479 485 r|469 478 487 502 r|459 469 487 508 g|468 471 473 474 k
436 466 472 473 g|456 466 495 509 r|492 494 502 519 r|488 501 506 540 r|492 505 510 515 r
505 507 511 512 g|490 507 510 515 r|488 494 510 515 g|464 489 495 496 g|474 489 528 534 r
496 497 528 544 g|485 486 492 493 g|474 478 487 492 g|418 428 479 494 g|406 426 429 438 g
410 426 430 440 r|416 426 430 450 g|413 417 425 427 g|374 382 418 427 g|338 354 383 395 g
304 318 355 369 g|297 315 319 341 g|286 308 317 323 g|299 300 303 310 g|295 300 330 337 r
313 329 335 354 r|329 334 336 351 k|330 335 370 382 r|369 369 418 432 r|428 428 435 438 r
313 324 435 452 g|324 324 394 423 r|281 314 394 395 g|276 300 315 328 g|293 298 301 326 g
293 295 298 301 g|293 295 315 340 r|304 310 315 322 g|303 310 370 379 r|360 369 392 438 r
382 391 400 424 r|390 394 395 403 k|380 394 395 421 k|358 372 395 408 g|357 372 397 404 r
388 396 428 435 r|391 427 430 448 r|414 418 425 429 r|362 386 425 428 g|359 370 387 411 g
333 347 371 374 g|341 347 376 385 r|355 375 388 405 r|385 385 390 393 g|381 385 389 405 r
372 388 408 416 r|383 395 408 410 g|375 382 396 404 g|339 359 383 384 g|354 354 360 363 g
340 352 355 363 g|348 352 373 376 r|363 372 373 380 k|371 372 392 399 r|388 391 397 398 r
392 394 397 399 g|390 394 398 401 r|386 397 417 423 r|407 416 418 429 k|412 417 446 450 r
426 435 446 450 g|432 434 436 439 k|417 425 435 436 g|395 397 427 441 g|384 391 398 401 g
378 391 398 406 r|356 361 398 415 g|375 391 395 395 g|389 391 405 415 r|395 403 447 447 r`;

const fill = { r: '#ff0000', g: '#3cb371', k: '#000000' };
const top0 = 110;
let svg = '<rect x="0" y="336" width="100%" height="1" fill="#778899"/>';

candles.trim().split(/[|\n]/).forEach((candle, i) => {
  const [high, top, bottom, low, type] = candle.split(' ');
  const x = i * 8;
  svg += `<rect x="${x}" y="${high - top0}" width="1" height="${low - high}"/>`;
  svg += `<rect x="${x - 2}" y="${top - top0}" width="5" height="${bottom - top}"/>`;
  if (bottom - top > 2) {
    svg += `<rect x="${x - 1}" y="${top - top0 + 1}" width="3" height="${bottom - top - 2}" fill="${fill[type]}"/>`;
  }
});

// Chart shift marker and the corner mark
svg += '<path d="M1235 0h9l-4.500 5z" fill="#778899"/>';
svg += '<svg y="100%" overflow="visible"><path d="M0 0v-6l5 6z" fill="#778899"/></svg>';
document.getElementById('candles').innerHTML = svg;

// Axis labels
const prices = '153.430 152.455 151.480 150.505 149.530 148.555 147.605 146.630 145.655 144.680 143.705 142.730 141.755 140.780 139.830 138.855 137.880 136.905 135.930 134.955 133.980 133.005 132.030 131.080 130.105 129.130 128.155';
document.getElementById('prices').innerHTML = prices.split(' ').map(p => `<li>${p}</li>`).join('');

const dates = ['8 Nov 2018', '18 Nov 2018', '27 Nov 2018', '6 Dec 2018', '16 Dec 2018', '25 Dec 2018', '3 Jan 2019', '13 Jan 2019', '22 Jan 2019', '31 Jan 2019', '10 Feb 2019', '19 Feb 2019', '28 Feb 2019', '10 Mar 2019', '19 Mar 2019', '28 Mar 2019', '7 Apr 2019', '16 Apr 2019', '25 Apr 2019', '5 May 2019'];
document.getElementById('dates').innerHTML = dates.map(d => `<li>${d}</li>`).join('');
```
